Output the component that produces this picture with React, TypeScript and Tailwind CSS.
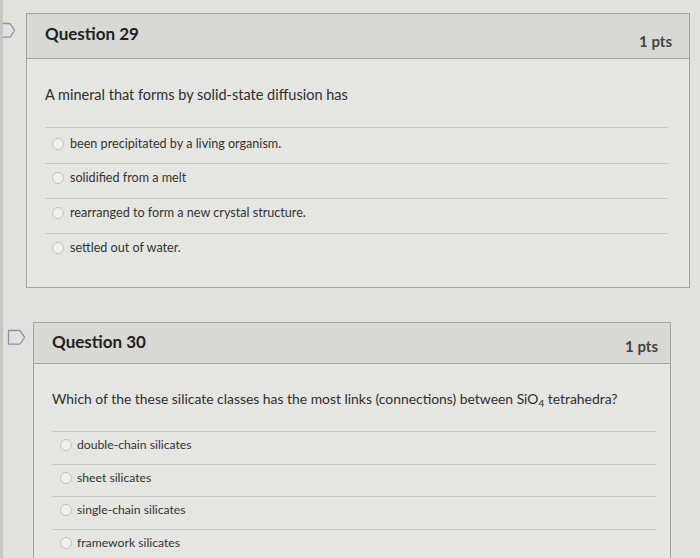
import type { ReactNode } from 'react';

type Question = {
  number: number;
  points: string;
  prompt: ReactNode;
  answers: string[];
};

const questions: Question[] = [
  {
    number: 29,
    points: '1 pts',
    prompt: 'A mineral that forms by solid-state diffusion has',
    answers: [
      'been precipitated by a living organism.',
      'solidified from a melt',
      'rearranged to form a new crystal structure.',
      'settled out of water.',
    ],
  },
  {
    number: 30,
    points: '1 pts',
    prompt: (
      <>
        Which of the these silicate classes has the most links (connections) between SiO
        <sub className="text-[10px]">4</sub> tetrahedra?
      </>
    ),
    answers: ['double-chain silicates', 'sheet silicates', 'single-chain silicates', 'framework silicates'],
  },
];

function FlagIcon({ className }: { className: string }) {
  return (
    <svg width="19" height="17" viewBox="0 0 19 17" fill="none" className={className}>
      <path
        d="M1.5 1.5 H12 Q13 1.5 13.6 2.3 L17.2 7.6 Q17.6 8.3 17.2 9 L13.6 14.3 Q13 15.1 12 15.1 H1.5 Z"
        stroke="#8a93a3"
        strokeWidth="1.3"
        strokeLinejoin="round"
      />
    </svg>
  );
}

function Radio() {
  return <span className="block w-[12px] h-[12px] shrink-0 rounded-full border border-[#c2c2bf] bg-[#efefed]" />;
}

export default function App() {
  const [q29, q30] = questions;

  return (
    <div
      className="h-[558px] w-[700px] overflow-hidden bg-[#e1e1de] border-l-[3px] border-[#c6c6c3] text-[#2e2e2e]"
      style={{ fontFamily: 'Lato, "Open Sans", sans-serif' }}
    >
      {/* Question 29 */}
      <div className="relative mt-[13px] ml-[23px] w-[664px] border border-[#a3a3a0] bg-[#e5e5e2]">
        <FlagIcon className="absolute -left-[30px] top-[8px]" />
        <div className="h-[45px] flex items-center justify-between pl-[18px] pr-[17px] bg-[#d8d8d5] border-b border-[#a3a3a0]">
          <h2 className="pb-[5px] text-[17px] font-bold text-[#222]">Question {q29.number}</h2>
          <span className="pt-[10px] text-[15px] font-bold text-[#444]">{q29.points}</span>
        </div>
        <div className="pt-[26px] pb-[19px] pl-[18px] pr-[21px]">
          <p className="text-[14.5px] leading-[20px] mb-[22px]">{q29.prompt}</p>
          <div>
            {q29.answers.map((answer, i) => (
              <div
                key={answer}
                className={`${i === 0 ? 'h-[36px] pt-[8px]' : 'h-[35px] pt-[6px]'} flex items-start gap-[6px] pl-[7px] border-t border-[#c9c9c6]`}
              >
                <span className="pt-[2px]">
                  <Radio />
                </span>
                <span className="text-[12.6px] leading-[16px] text-[#333]">{answer}</span>
              </div>
            ))}
          </div>
        </div>
      </div>

      {/* Question 30 */}
      <div className="relative mt-[34px] ml-[30px] w-[638px] border border-[#a3a3a0] bg-[#e5e5e2]">
        <FlagIcon className="absolute -left-[27px] top-[6px]" />
        <div className="h-[41px] flex items-center justify-between pl-[18px] pr-[12px] bg-[#d8d8d5] border-b border-[#a3a3a0]">
          <h2 className="pb-[2px] text-[17px] font-bold text-[#222]">Question {q30.number}</h2>
          <span className="pt-[6px] text-[15px] font-bold text-[#444]">{q30.points}</span>
        </div>
        <div className="pt-[25px] pl-[18px] pr-[14px]">
          <p className="text-[13.9px] leading-[20px] mb-[22px]">{q30.prompt}</p>
          <div>
            {q30.answers.map((answer) => (
              <div
                key={answer}
                className="h-[32.5px] pt-[5px] flex items-start gap-[5px] pl-[8px] border-t border-[#c9c9c6]"
              >
                <span className="pt-[2px]">
                  <Radio />
                </span>
                <span className="text-[12.2px] leading-[16px] text-[#333]">{answer}</span>
              </div>
            ))}
          </div>
        </div>
      </div>
    </div>
  );
}
